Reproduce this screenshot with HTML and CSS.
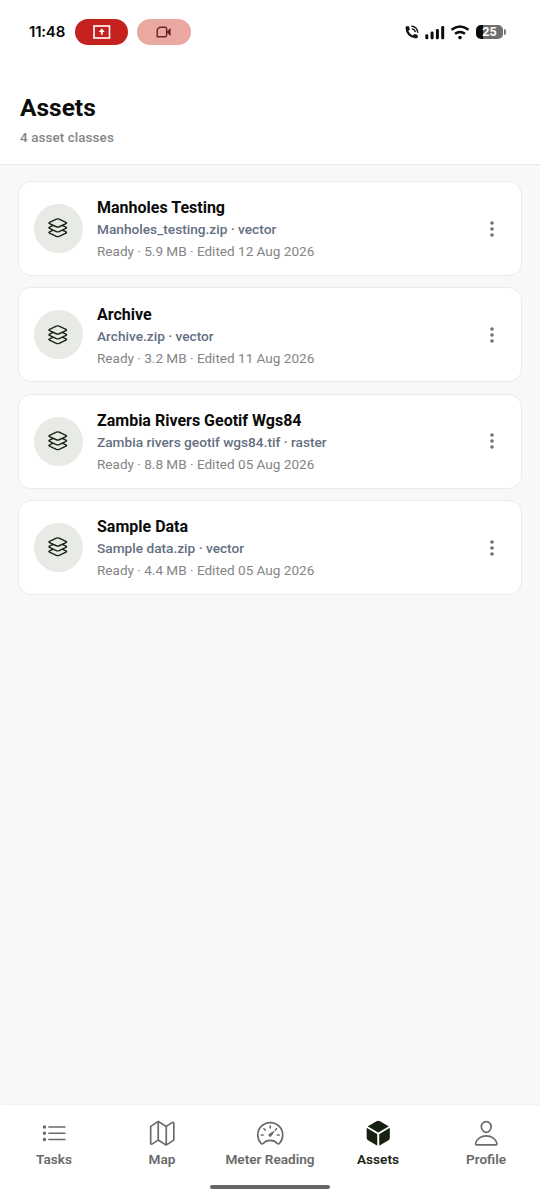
FILE: index.html
```html
<!DOCTYPE html>
<html lang="en">
<head>
<meta charset="utf-8">
<title>Assets</title>
<link rel="stylesheet" href="styles.css">
</head>
<body>
<svg class="defs" width="0" height="0">
  <symbol id="layers" viewBox="0 0 512 512">
    <path d="M434.8 137.65l-149.36-68.1c-16.19-7.4-42.69-7.4-58.88 0L77.3 137.65c-17.6 8-17.6 21.09 0 29.09l148 67.5c16.89 7.7 44.69 7.7 61.58 0l148-67.5c17.52-8 17.52-21.1-.08-29.09zM160 308.52l-82.7 37.11c-17.6 8-17.6 21.1 0 29.1l148 67.5c16.89 7.69 44.69 7.69 61.58 0l148-67.5c17.6-8 17.6-21.1 0-29.1l-79.94-38.47M160 204.48l-82.8 37.16c-17.6 8-17.6 21.1 0 29.1l148 67.49c16.89 7.7 44.69 7.7 61.58 0l148-67.49c17.7-8 17.7-21.1.1-29.1L352 204.48"/>
  </symbol>
  <symbol id="dots" viewBox="0 0 4 18">
    <circle cx="2" cy="3" r="1.8"/><circle cx="2" cy="9" r="1.8"/><circle cx="2" cy="15" r="1.8"/>
  </symbol>
</svg>
<div class="screen">
  <div class="status">
    <span class="clock">11:48</span>
    <span class="pill pill-cast">
      <svg width="18" height="14" viewBox="0 0 18 14"><rect x="1" y="1" width="15.5" height="12" fill="none" stroke="#fff" stroke-width="1.6"/><path d="M8.8 3.6l3 3.3H9.7v2.8H7.9V6.9H5.8z" fill="#fff"/></svg>
    </span>
    <span class="pill pill-video">
      <svg width="16" height="12" viewBox="0 0 16 12"><path d="M3.6 1.2h5.6q1.4 0 1.4 1.4v6.8q0 1.4-1.4 1.4H1.2V3.6z" fill="none" stroke="#682522" stroke-width="1.4" stroke-linejoin="round"/><path d="M10.6 5.5L14.6 2v8l-4-3.5z" fill="#682522"/></svg>
    </span>
    <div class="signals">
      <svg width="14" height="14" viewBox="0 0 14 14"><path d="M1 1.3h2.8l1.2 3.2-1.7 1.6q1.4 3 4.4 4.5l1.7-1.7 3.3 1.1v2.8q-1 .7-2.8.5Q1.2 11.7.6 3.5.5 2.1 1 1.3z" fill="#111"/><path d="M6.2 1.1q6 .4 6.6 6.6M6.8 3.9q3 .3 3.5 3.3" fill="none" stroke="#111" stroke-width="1.4"/></svg>
      <svg class="bars" width="20" height="15" viewBox="0 0 20 15"><g fill="#0c0c0c"><rect x=".3" y="9.3" width="3" height="5" rx="1.2"/><rect x="5.6" y="6.6" width="3" height="7.7" rx="1.2"/><rect x="10.9" y="3.9" width="3" height="10.4" rx="1.2"/><rect x="16.2" y="1" width="3" height="13.3" rx="1.2"/></g></svg>
      <svg class="wifi" width="20" height="15" viewBox="0 0 20 15"><path d="M1.5 4.8Q10-1.8 18.5 4.8M5 8.8q5-3.8 10 0" fill="none" stroke="#0c0c0c" stroke-width="2.4"/><circle cx="10" cy="12.6" r="1.8" fill="#0c0c0c"/></svg>
      <span class="battery">25</span><span class="cap"></span>
    </div>
  </div>
  <header class="header">
    <h1>Assets</h1>
    <p>4 asset classes</p>
  </header>
  <main class="list">
    <article class="card">
      <div class="avatar"><svg><use href="#layers"/></svg></div>
      <div class="info"><h2>Manholes Testing</h2><p class="file">Manholes_testing.zip · vector</p><p class="meta">Ready · 5.9 MB · Edited 12 Aug 2026</p></div>
      <svg class="more"><use href="#dots"/></svg>
    </article>
    <article class="card">
      <div class="avatar"><svg><use href="#layers"/></svg></div>
      <div class="info"><h2>Archive</h2><p class="file">Archive.zip · vector</p><p class="meta">Ready · 3.2 MB · Edited 11 Aug 2026</p></div>
      <svg class="more"><use href="#dots"/></svg>
    </article>
    <article class="card">
      <div class="avatar"><svg><use href="#layers"/></svg></div>
      <div class="info"><h2>Zambia Rivers Geotif Wgs84</h2><p class="file">Zambia rivers geotif wgs84.tif · raster</p><p class="meta">Ready · 8.8 MB · Edited 05 Aug 2026</p></div>
      <svg class="more"><use href="#dots"/></svg>
    </article>
    <article class="card">
      <div class="avatar"><svg><use href="#layers"/></svg></div>
      <div class="info"><h2>Sample Data</h2><p class="file">Sample data.zip · vector</p><p class="meta">Ready · 4.4 MB · Edited 05 Aug 2026</p></div>
      <svg class="more"><use href="#dots"/></svg>
    </article>
  </main>
  <nav class="tabs">
    <div class="tab"><svg viewBox="0 0 512 512"><path d="M160 144h288M160 256h288M160 368h288"/><g class="solid"><circle cx="80" cy="144" r="16"/><circle cx="80" cy="256" r="16"/><circle cx="80" cy="368" r="16"/></g></svg><span>Tasks</span></div>
    <div class="tab"><svg viewBox="0 0 512 512"><path d="M313.27 124.64L198.73 51.36a32 32 0 00-29.28.35L56.51 127.49A16 16 0 0048 141.63v295.8a16 16 0 0023.49 14.14l97.82-63.79a32 32 0 0129.5-.24l111.86 73a32 32 0 0029.27-.11l115.43-75.94a16 16 0 008.63-14.2V74.57a16 16 0 00-23.49-14.14l-98 63.86a32 32 0 01-29.24.35zM328 128v336M184 48v336"/></svg><span>Map</span></div>
    <div class="tab"><svg viewBox="0 0 512 512"><path class="needle" d="M326.1 231.9l-47.5 75.5a31 31 0 01-7 7 30.11 30.11 0 01-35-49l75.5-47.5a10.23 10.23 0 0111.7 0 10.06 10.06 0 012.3 14z"/><path d="M256 64C132.3 64 32 164.2 32 287.9a223.18 223.18 0 0056.3 148.5c1.1 1.2 2.1 2.4 3.2 3.5a25.19 25.19 0 0037.1-.1 173.13 173.13 0 01254.8 0 25.19 25.19 0 0037.1.1l3.2-3.5A223.18 223.18 0 00480 287.9C480 164.2 379.7 64 256 64zM256 128v32M416 288h-32M128 288H96M165.49 197.49l-22.63-22.63M346.51 197.49l22.63-22.63"/></svg><span>Meter Reading</span></div>
    <div class="tab active"><svg viewBox="0 0 512 512"><path class="needle" d="M441 136.3a4 4 0 000-6.9L288 40.6a64 64 0 00-64 0L71 129.4a4 4 0 000 6.9L254 243.9a4 4 0 004 0zM238 275a8 8 0 00-4-7L54 163.5a4 4 0 00-6 3.5v172.8a48 48 0 0023.8 41.5L232 474.7a4 4 0 006-3.5zM274 275a8 8 0 014-7l180-104.5a4 4 0 016 3.5v172.8a48 48 0 01-23.8 41.5L280 474.7a4 4 0 01-6-3.5z"/></svg><span>Assets</span></div>
    <div class="tab"><svg viewBox="0 0 512 512"><path d="M344 144c-3.92 52.87-44 96-88 96s-84.15-43.12-88-96c-4-55 35-96 88-96s92 42 88 96zM256 304c-87 0-175.3 48-191.64 138.6C62.39 453.52 68.57 464 80 464h352c11.44 0 17.62-10.48 15.65-21.4C431.3 352 343 304 256 304z"/></svg><span>Profile</span></div>
  </nav>
  <div class="home"><span></span></div>
</div>
</body>
</html>
```
FILE: styles.css
```css
* { box-sizing: border-box; }
body, h1, h2, p { margin: 0; }
body { font-family: Roboto, "Liberation Sans", sans-serif; background: #f7f8fa; }
.defs { display: block; }
.screen { width: 540px; height: 1200px; display: flex; flex-direction: column; overflow: hidden; }

.status { height: 64px; flex: none; padding: 0 34px 0 29px; display: flex; align-items: center; background: #fff; }
.clock { width: 46px; font: 600 15px/20px Inter, sans-serif; letter-spacing: -0.2px; color: #080808; }
.pill { width: 53px; height: 26px; border-radius: 13px; display: flex; align-items: center; justify-content: center; }
.pill-cast { background: #c5211f; }
.pill-video { width: 54px; margin-left: 9px; background: #eaa8a2; }
.signals { margin-left: auto; display: flex; align-items: center; }
.bars { margin-left: 6px; }
.wifi { margin-left: 5px; }
.battery { margin-left: 6px; width: 27px; height: 14px; border-radius: 5px; background: linear-gradient(90deg, #080808 25%, #6e6e6e 25%); color: #fff; font: 700 12.5px/14px Roboto, sans-serif; text-align: center; }
.cap { width: 2px; height: 6px; border-radius: 0 2px 2px 0; background: #777; margin-left: 1px; }

.header { height: 101px; flex: none; padding: 30px 20px 0; background: #fff; border-bottom: 1px solid #e6e9ec; }
.header h1 { font-size: 24.5px; line-height: 28px; font-weight: 700; color: #0c0c0c; }
.header p { margin-top: 7px; font-size: 13.4px; line-height: 18px; font-weight: 500; letter-spacing: .1px; color: #858585; }

.list { flex: 1; padding: 16px 18px 0; display: flex; flex-direction: column; gap: 11.4px; }
.card { height: 95px; flex: none; padding: 0 27.5px 0 15px; display: flex; align-items: center; background: #fff; border: 1px solid #e9ebed; border-radius: 13px; }
.avatar { width: 49px; height: 49px; border-radius: 50%; background: #e8ebe5; display: flex; align-items: center; justify-content: center; }
.avatar svg { width: 23.5px; height: 23.5px; margin: 0 1px 1px 0; fill: none; stroke: #1b2413; stroke-width: 30; stroke-linecap: round; stroke-linejoin: round; }
.info { flex: 1; margin-left: 14px; padding-top: 1.4px; white-space: nowrap; }
.info h2 { margin-bottom: -2px; font-size: 16px; line-height: 24px; font-weight: 700; color: #0b0b0b; }
.file { font-size: 13.68px; line-height: 22px; font-weight: 500; color: #646f82; }
.meta { font-size: 13.55px; line-height: 22px; color: #858585; }
.more { width: 4px; height: 18px; fill: #717171; }

.tabs { height: 75px; flex: none; padding-top: 14px; display: grid; grid-template-columns: repeat(5, 1fr); background: #fff; box-shadow: 0 -1px 3px rgba(0, 0, 0, .04); }
.tab { display: flex; flex-direction: column; align-items: center; font-size: 13.6px; line-height: 18px; font-weight: 600; color: #696969; white-space: nowrap; }
.tab svg { width: 28.5px; height: 28.5px; margin: 0 0 2.5px 0; fill: none; stroke: currentColor; stroke-width: 30; stroke-linecap: round; stroke-linejoin: round; }
.tab .solid { fill: currentColor; }
.tab .needle { fill: currentColor; stroke: none; }
.tab.active { color: #17210f; }
.home { height: 20px; flex: none; display: flex; justify-content: center; background: #fff; }
.home span { width: 120px; height: 4px; margin-top: 5px; border-radius: 2px; background: #656565; }
```
